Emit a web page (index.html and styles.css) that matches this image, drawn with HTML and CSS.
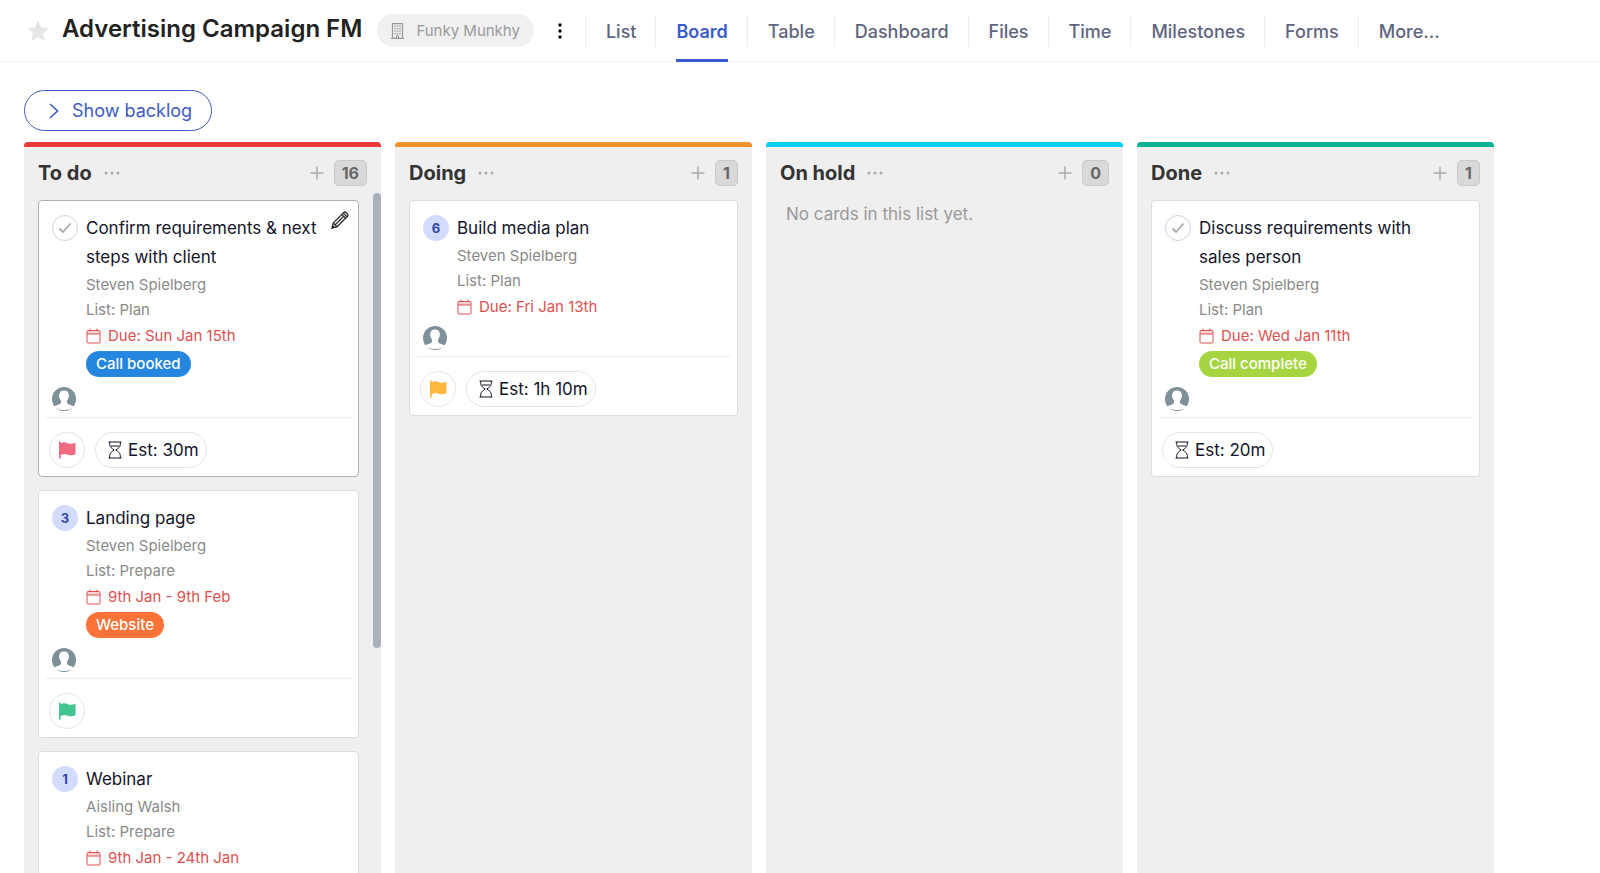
FILE: index.html
```
<!DOCTYPE html>
<html lang="en">
<head>
    <meta charset="UTF-8">
    <title>Advertising Campaign FM</title>
    <meta name="viewport" content="width=device-width, initial-scale=1">
    <link rel="stylesheet" href="styles.css">
</head>
<body>
<svg class="sprite" aria-hidden="true">
    <symbol id="calendar" viewBox="0 0 16 16"><path d="M2 2.500h11a1 1 0 0 1 1 1v10.500a1 1 0 0 1-1 1H2a1 1 0 0 1-1-1V3.500a1 1 0 0 1 1-1zM1 6h13M4 .5V3M11 .5V3" fill="none" stroke="currentColor"/><path d="M1 3h13v3H1z" fill="currentColor" opacity=".25"/></symbol>
    <symbol id="user" viewBox="0 0 24 24"><circle cx="12" cy="12" r="12" fill="#80909a"/><path d="M12 3.500c3.200 0 4.900 2 4.900 4.900 0 1.900-.8 4-1.900 5.100v2.200c.4 1.700 3.500 2.200 7.500 3.800C20.600 21.500 16 23 12 23s-8.600-1.500-10.500-3.500c4-1.600 7.100-2.100 7.500-3.800v-2.200c-1.100-1.100-1.900-3.200-1.900-5.100 0-2.900 1.700-4.900 4.900-4.900z" fill="#fff"/></symbol>
    <symbol id="flag" viewBox="0 0 18 18"><path d="M1 .5h1.700v1.700c3-1.300 5-1 7 0 2.300 1 4.500.6 7.800-.5v11.500c-3 1.300-5.500 1.500-7.800.6-2.200-.9-4-1-7 .2v3.500H1z" fill="currentColor"/></symbol>
    <symbol id="hourglass" viewBox="0 0 14 18"><path d="M.5 1h13M.5 17h13M1.700 1v2.500C1.700 6 4 7.500 6.200 9c-2.200 1.500-4.500 3-4.500 5.500V17M12.300 1v2.500c0 2.500-2.300 4-4.500 5.500 2.200 1.500 4.500 3 4.500 5.500V17M3 5h8" fill="none" stroke="currentColor"/></symbol>
    <symbol id="tick" viewBox="0 0 14 12"><path d="M1.500 6.500 5 10l7.500-8.500" fill="none" stroke="currentColor" stroke-width="1.800"/></symbol>
    <symbol id="dots" viewBox="0 0 16 4"><circle cx="2" cy="2" r="1.500"/><circle cx="8" cy="2" r="1.500"/><circle cx="14" cy="2" r="1.500"/></symbol>
    <symbol id="plus" viewBox="0 0 14 14"><path d="M7 .5v13M.5 7h13" fill="none" stroke="currentColor" stroke-width="1.500"/></symbol>
</svg>
<header class="top">
    <button class="star" aria-label="Favourite"><svg width="22" height="22" viewBox="0 0 22 22"><path d="M11 0l3.100 7.400 7.900.7-6 5.300 1.800 7.900-6.800-4.200-6.800 4.200L6 13.400 0 8.100l7.900-.7z" fill="#e6e6e6"/></svg></button>
    <h1 class="title">Advertising Campaign FM</h1>
    <a class="client" href="#"><svg width="13" height="16" viewBox="0 0 13 16"><path d="M1.500.6h10v14.800h-10zM0 15.400h13" fill="none" stroke="currentColor" stroke-width="1.200"/><path d="M3.300 3.200h6.500M3.300 5.700h6.500M3.300 8.200h6.500M3.300 10.700h6.500" stroke="currentColor" stroke-width="1.200" stroke-dasharray="1.500 1"/><path d="M5.500 15v-2.500h2V15" fill="none" stroke="currentColor"/></svg>Funky Munkhy</a>
    <button class="kebab" aria-label="Project menu"><svg width="6" height="16" viewBox="0 0 6 16"><circle cx="3" cy="2" r="1.700"/><circle cx="3" cy="8" r="1.700"/><circle cx="3" cy="14" r="1.700"/></svg></button>
    <nav class="tabs">
        <a href="#">List</a>
        <a class="on" href="#" aria-current="page">Board</a>
        <a href="#">Table</a>
        <a href="#">Dashboard</a>
        <a href="#">Files</a>
        <a href="#">Time</a>
        <a href="#">Milestones</a>
        <a href="#">Forms</a>
        <a href="#">More...</a>
    </nav>
</header>
<main class="main">
    <button class="backlog"><svg width="10" height="16" viewBox="0 0 10 16"><path d="M1 1l7.500 7L1 15" fill="none" stroke="currentColor" stroke-width="1.600"/></svg>Show backlog</button>
    <div class="board">
        <section class="column red scrolls">
            <div class="head">
                <h2>To do</h2>
                <button class="more" aria-label="List menu"><svg width="16" height="4"><use href="#dots"/></svg></button>
                <button class="add" aria-label="Add card"><svg width="14" height="14"><use href="#plus"/></svg></button>
                <span class="count">16</span>
            </div>
            <article class="card active">
                <button class="edit" aria-label="Edit"><svg width="18" height="18" viewBox="0 0 18 18"><path d="M1 17l1.200-5L12.500 1.700a2 2 0 0 1 2.800 0l1 1a2 2 0 0 1 0 2.800L6 15.800zM2.200 12 6 15.800M10.800 3.400l3.800 3.800M12.200 2l3.800 3.800M4.200 13.800l8.500-8.500" fill="none" stroke="currentColor" stroke-width="1.300"/><path d="M1 17l.7-2.800 2.100 2.100z"/></svg></button>
                <div class="task">
                    <button class="mark" aria-label="Complete"><svg width="14" height="12"><use href="#tick"/></svg></button>
                    <div class="body">
                        <h3>Confirm requirements &amp; next steps with client</h3>
                        <p>Steven Spielberg</p>
                        <p>List: Plan</p>
                        <p class="due"><svg width="16" height="16"><use href="#calendar"/></svg>Due: Sun Jan 15th</p>
                        <span class="tag blue">Call booked</span>
                    </div>
                </div>
                <svg class="avatar" width="24" height="24"><use href="#user"/></svg>
                <div class="foot">
                    <button class="flag high" aria-label="Priority"><svg width="18" height="18"><use href="#flag"/></svg></button>
                    <button class="est"><svg width="14" height="18"><use href="#hourglass"/></svg>Est: 30m</button>
                </div>
            </article>
            <article class="card">
                <div class="task">
                    <span class="mark num">3</span>
                    <div class="body">
                        <h3>Landing page</h3>
                        <p>Steven Spielberg</p>
                        <p>List: Prepare</p>
                        <p class="due"><svg width="16" height="16"><use href="#calendar"/></svg>9th Jan - 9th Feb</p>
                        <span class="tag orange">Website</span>
                    </div>
                </div>
                <svg class="avatar" width="24" height="24"><use href="#user"/></svg>
                <div class="foot">
                    <button class="flag low" aria-label="Priority"><svg width="18" height="18"><use href="#flag"/></svg></button>
                </div>
            </article>
            <article class="card">
                <div class="task">
                    <span class="mark num">1</span>
                    <div class="body">
                        <h3>Webinar</h3>
                        <p>Aisling Walsh</p>
                        <p>List: Prepare</p>
                        <p class="due"><svg width="16" height="16"><use href="#calendar"/></svg>9th Jan - 24th Jan</p>
                    </div>
                </div>
                <svg class="avatar" width="24" height="24"><use href="#user"/></svg>
            </article>
            <i class="thumb"></i>
        </section>
        <section class="column amber">
            <div class="head">
                <h2>Doing</h2>
                <button class="more" aria-label="List menu"><svg width="16" height="4"><use href="#dots"/></svg></button>
                <button class="add" aria-label="Add card"><svg width="14" height="14"><use href="#plus"/></svg></button>
                <span class="count">1</span>
            </div>
            <article class="card">
                <div class="task">
                    <span class="mark num">6</span>
                    <div class="body">
                        <h3>Build media plan</h3>
                        <p>Steven Spielberg</p>
                        <p>List: Plan</p>
                        <p class="due"><svg width="16" height="16"><use href="#calendar"/></svg>Due: Fri Jan 13th</p>
                    </div>
                </div>
                <svg class="avatar" width="24" height="24"><use href="#user"/></svg>
                <div class="foot">
                    <button class="flag medium" aria-label="Priority"><svg width="18" height="18"><use href="#flag"/></svg></button>
                    <button class="est"><svg width="14" height="18"><use href="#hourglass"/></svg>Est: 1h 10m</button>
                </div>
            </article>
        </section>
        <section class="column cyan">
            <div class="head">
                <h2>On hold</h2>
                <button class="more" aria-label="List menu"><svg width="16" height="4"><use href="#dots"/></svg></button>
                <button class="add" aria-label="Add card"><svg width="14" height="14"><use href="#plus"/></svg></button>
                <span class="count">0</span>
            </div>
            <p class="empty">No cards in this list yet.</p>
        </section>
        <section class="column green">
            <div class="head">
                <h2>Done</h2>
                <button class="more" aria-label="List menu"><svg width="16" height="4"><use href="#dots"/></svg></button>
                <button class="add" aria-label="Add card"><svg width="14" height="14"><use href="#plus"/></svg></button>
                <span class="count">1</span>
            </div>
            <article class="card">
                <div class="task">
                    <button class="mark" aria-label="Complete"><svg width="14" height="12"><use href="#tick"/></svg></button>
                    <div class="body">
                        <h3>Discuss requirements with sales person</h3>
                        <p>Steven Spielberg</p>
                        <p>List: Plan</p>
                        <p class="due"><svg width="16" height="16"><use href="#calendar"/></svg>Due: Wed Jan 11th</p>
                        <span class="tag lime">Call complete</span>
                    </div>
                </div>
                <svg class="avatar" width="24" height="24"><use href="#user"/></svg>
                <div class="foot">
                    <button class="est"><svg width="14" height="18"><use href="#hourglass"/></svg>Est: 20m</button>
                </div>
            </article>
        </section>
    </div>
</main>
</body>
</html>
```
FILE: styles.css
```
*{margin:0;padding:0;box-sizing:border-box;}
body{display:flex;flex-direction:column;height:100vh;overflow:hidden;background:#fff;color:#14142b;font:15px/25px Inter,"Liberation Sans",sans-serif;}
button{border:0;background:none;font:inherit;color:inherit;cursor:pointer;}
a{text-decoration:none;color:inherit;}
svg{display:block;flex:none;}
.sprite{position:absolute;width:0;height:0;}

.top{display:flex;align-items:center;flex:none;height:63px;padding-left:27px;border-bottom:2px solid #f7f7f8;white-space:nowrap;}
.star{margin-right:13px;}
.title{margin-right:15px;padding-bottom:4px;font-size:24px;line-height:32px;font-weight:600;color:#222;}
.client{display:flex;align-items:center;gap:12px;height:33px;padding:0 14px;border-radius:17px;background:#f0f0f0;color:#999;}
.kebab{margin:0 22px 0 23px;}
.tabs{display:flex;align-items:center;height:62px;font-size:18px;font-weight:500;color:#5f6580;}
.tabs a{display:flex;align-items:center;height:32px;padding:2px 19px 0 20px;border-left:1px solid #e9eaf2;}
.tabs .on{position:relative;font-weight:600;color:#3a5bd0;}
.tabs .on:after{content:'';position:absolute;left:20px;right:19px;bottom:-15px;height:3px;background:#3a5bd0;}

.main{display:flex;flex-direction:column;align-items:flex-start;flex:1;min-height:0;padding:27px 24px 0;}
.backlog{display:flex;align-items:center;flex:none;gap:13px;height:41px;padding:0 19px 0 24px;border:1px solid #3f5bbf;border-radius:21px;font-size:18px;color:#3f5bbf;}
.board{display:flex;flex:1;gap:14px;width:100%;min-height:0;margin-top:11px;}
.column{position:relative;flex:1;max-width:357px;padding:0 14px;border-radius:4px 4px 0 0;background:#efefef;overflow:hidden;}
.column:before{content:'';display:block;height:5px;margin:0 -22px;background:#ccc;}
.red:before{background:#e93b3b;}
.amber:before{background:#f7912a;}
.cyan:before{background:#00cdf5;}
.green:before{background:#0bb594;}
.scrolls{padding-right:22px;}
.thumb{position:absolute;top:51px;right:0;width:8px;height:455px;border-radius:4px;background:#abb1bc;}

.head{display:flex;align-items:center;height:53px;padding-bottom:1px;}
.scrolls .head{margin-right:-8px;}
.head h2{font-size:20px;line-height:25px;font-weight:700;color:#333;}
.more{margin-left:12px;fill:#aaa;}
.add{margin:0 10px 0 auto;color:#aaa;}
.count{height:26px;padding:0 7px;border:1px solid #c9c9c9;border-radius:5px;background:#d9d9d9;font-size:16px;line-height:24px;font-weight:700;color:#666;}
.empty{padding-left:6px;font-size:17px;line-height:29px;color:#999;}

.card{position:relative;margin-bottom:13px;padding:13px 7px 8px;border:1px solid #dcdcdc;border-radius:4px;background:#fff;}
.active{border-color:#b0b0b0;}
.edit{position:absolute;top:10px;right:9px;color:#333;}
.task{display:flex;gap:8px;padding:0 32px 0 6px;}
.mark{display:flex;align-items:center;justify-content:center;flex:none;width:26px;height:26px;margin-top:1px;border:1px solid #ccd3e3;border-radius:50%;color:#aaa;}
.num{border:0;background:#d3dcfd;font-size:13px;font-weight:700;color:#3346a8;}
.body{color:#8a8a8a;}
.body h3{font-size:17px;line-height:29px;font-weight:400;color:#14142b;}
.body .due{display:flex;align-items:center;gap:6px;margin-top:1px;color:#dd5050;}
.tag{display:inline-block;margin:3px 0;padding:0 10px;border-radius:13px;line-height:26px;font-weight:500;color:#fff;vertical-align:top;}
.blue{background:#2586e0;}
.orange{background:#fb7339;}
.lime{background:#a7d541;}
.avatar{margin:7px 6px 6px;}
.foot{display:flex;gap:10px;padding:14px 3px 0;border-top:1px solid #ededed;}
.flag{display:flex;align-items:center;justify-content:center;width:36px;height:36px;border:1px solid #dfe5ef;border-radius:50%;}
.high{color:#ee6b80;}
.medium{color:#fdb840;}
.low{color:#42c58e;}
.est{display:flex;align-items:center;gap:6px;height:36px;padding:0 7px 0 12px;border:1px solid #dfe5ef;border-radius:18px;font-size:17px;}
```
